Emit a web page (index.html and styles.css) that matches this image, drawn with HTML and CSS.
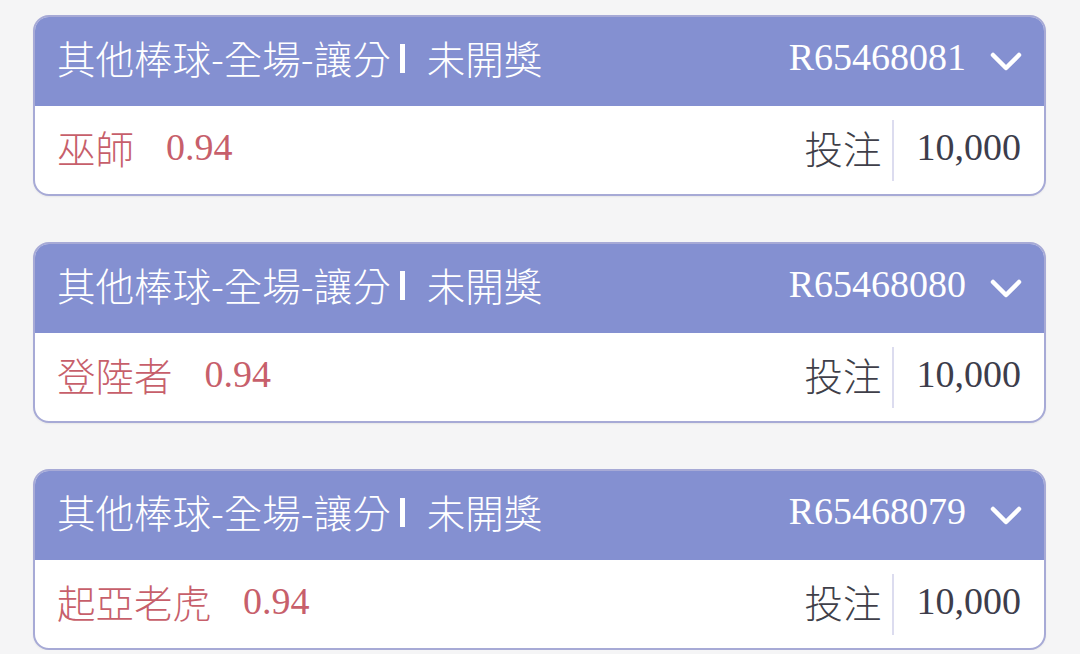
FILE: index.html
```html
<!DOCTYPE html>
<html lang="zh-Hant">
<head>
    <meta charset="UTF-8">
    <meta name="viewport" content="width=device-width, initial-scale=1.0">
    <title>注單紀錄</title>
    <link rel="stylesheet" href="styles.css">
</head>
<body>
    <main class="bet-list">

        <!-- Bet 1 -->
        <section class="bet-card">
            <div class="bet-head">
                <div class="bet-title">其他棒球-全場-讓分<span class="bar"></span><span class="status">未開獎</span></div>
                <div class="bet-id">R65468081</div>
                <svg class="chevron" viewBox="0 0 32 20"><path d="M3 3 L16 16 L29 3" /></svg>
            </div>
            <div class="bet-body">
                <span class="pick">巫師</span>
                <span class="odds">0.94</span>
                <span class="label">投注</span>
                <span class="divider"></span>
                <span class="amount">10,000</span>
            </div>
        </section>

        <!-- Bet 2 -->
        <section class="bet-card">
            <div class="bet-head">
                <div class="bet-title">其他棒球-全場-讓分<span class="bar"></span><span class="status">未開獎</span></div>
                <div class="bet-id">R65468080</div>
                <svg class="chevron" viewBox="0 0 32 20"><path d="M3 3 L16 16 L29 3" /></svg>
            </div>
            <div class="bet-body">
                <span class="pick">登陸者</span>
                <span class="odds">0.94</span>
                <span class="label">投注</span>
                <span class="divider"></span>
                <span class="amount">10,000</span>
            </div>
        </section>

        <!-- Bet 3 -->
        <section class="bet-card">
            <div class="bet-head">
                <div class="bet-title">其他棒球-全場-讓分<span class="bar"></span><span class="status">未開獎</span></div>
                <div class="bet-id">R65468079</div>
                <svg class="chevron" viewBox="0 0 32 20"><path d="M3 3 L16 16 L29 3" /></svg>
            </div>
            <div class="bet-body">
                <span class="pick">起亞老虎</span>
                <span class="odds">0.94</span>
                <span class="label">投注</span>
                <span class="divider"></span>
                <span class="amount">10,000</span>
            </div>
        </section>

    </main>
</body>
</html>
```

FILE: styles.css
```css
body {
    margin: 0;
    background-color: #f5f5f6;
    font-family: "Noto Sans CJK TC", "Noto Sans", sans-serif;
    font-weight: 300;
    overflow: hidden;
}

.bet-list {
    display: flex;
    flex-direction: column;
    gap: 46px;
    padding: 15px 34px 0 33px;
}

.bet-card {
    border: 2px solid #a7aad6;
    border-radius: 16px;
    background-color: #ffffff;
    overflow: hidden;
    box-shadow: 0 1px 2px rgba(0, 0, 0, 0.06);
}

.bet-head {
    display: flex;
    align-items: center;
    height: 80px;
    padding: 0 22px 9px 22px;
    background-color: #8490d1;
    color: #ffffff;
}

.bet-title {
    flex: 1;
    display: flex;
    align-items: center;
    font-size: 38.5px;
    line-height: 1;
    white-space: nowrap;
}

.bar {
    display: inline-block;
    width: 5px;
    height: 29px;
    margin: 2px 22px 0 9px;
    background-color: #ffffff;
}

.bet-id {
    font-family: "Liberation Serif", serif;
    font-weight: 400;
    font-size: 38px;
    line-height: 1;
}

.chevron {
    width: 32px;
    height: 20px;
    margin: 10px 0 0 24px;
    fill: none;
    stroke: #ffffff;
    stroke-width: 4.5;
    stroke-linecap: round;
    stroke-linejoin: round;
}

.bet-body {
    display: flex;
    align-items: center;
    height: 82px;
    padding: 0 23px 6px 22px;
}

.pick {
    font-size: 38.5px;
    color: #c75f6b;
}

.odds {
    flex: 1;
    margin-left: 32px;
    font-family: "Liberation Serif", serif;
    font-weight: 400;
    font-size: 38px;
    color: #c75f6b;
}

.label {
    font-size: 38.5px;
    color: #3f3f49;
}

.divider {
    width: 2px;
    height: 61px;
    margin: 6px 0 0 10px;
    background-color: #dcdcef;
}

.amount {
    margin-left: 23px;
    font-family: "Liberation Serif", serif;
    font-weight: 400;
    font-size: 38px;
    color: #3d3d4b;
}
```
